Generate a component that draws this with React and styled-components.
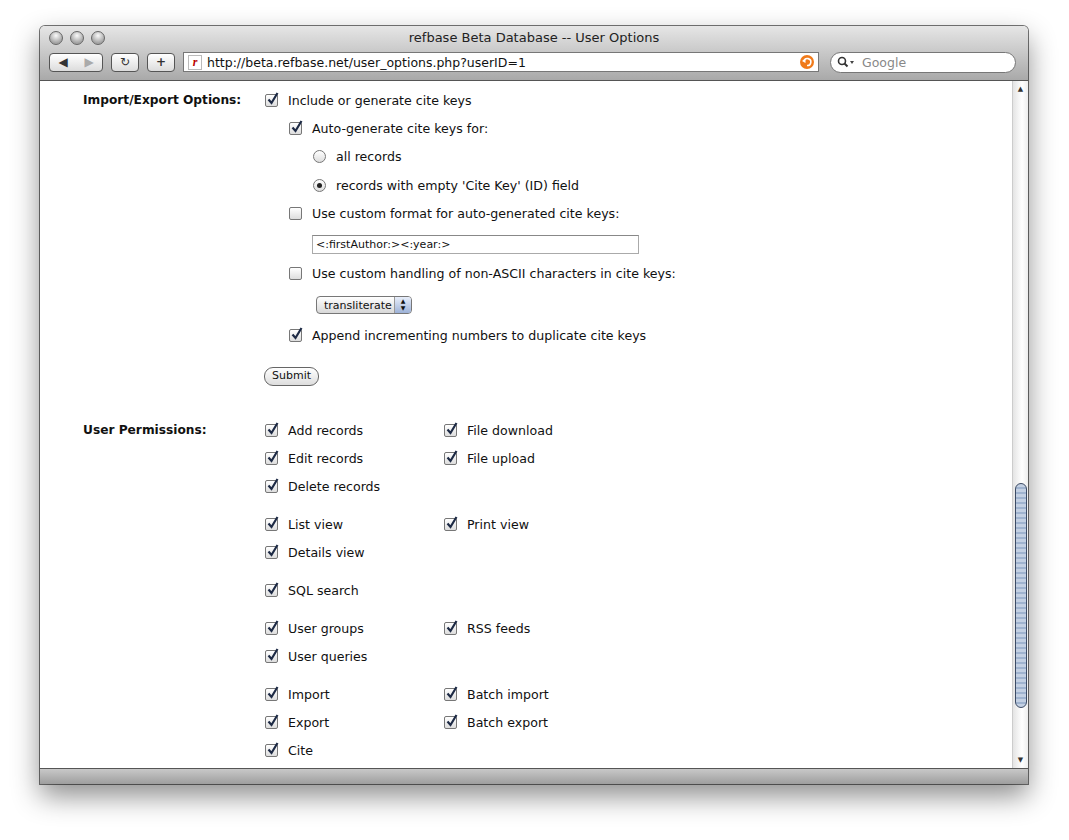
import React from 'react';
import styled, {createGlobalStyle} from 'styled-components';

const Global = createGlobalStyle`
  body { margin: 0; background: #fff; font-family: "DejaVu Sans", "Liberation Sans", sans-serif; }
`;

const Page = styled.div`
  width: 1069px;
  height: 840px;
  padding: 26px 0 0 40px;
  box-sizing: border-box;
`;

const Win = styled.div`
  width: 988px;
  height: 758px;
  display: flex;
  flex-direction: column;
  border-radius: 5px 5px 0 0;
  box-shadow: 0 12px 28px rgba(0,0,0,0.45), 0 0 0 1px #777;
  overflow: hidden;
`;

const Chrome = styled.div`
  height: 54px;
  background: linear-gradient(#e6e6e6, #a9a9a9);
  border-bottom: 1px solid #555;
  display: flex;
  flex-direction: column;
`;

const TitleRow = styled.div`
  height: 24px;
  display: flex;
  align-items: center;
  position: relative;
  padding-left: 9px;
  gap: 7px;
`;

const Light = styled.span`
  width: 12px;
  height: 12px;
  border-radius: 50%;
  border: 1px solid #666;
  background: radial-gradient(circle at 50% 30%, #fafafa, #a4a4a4 70%);
`;

const Title = styled.div`
  position: absolute;
  left: 0;
  right: 0;
  text-align: center;
  font-size: 13px;
  color: #222;
  top: 4px;
`;

const ToolRow = styled.div`
  display: flex;
  align-items: center;
  padding-left: 9px;
  gap: 8px;
  height: 24px;
`;

const Btn = styled.div`
  height: 19px;
  width: ${p => p.w}px;
  border: 1px solid #555;
  border-radius: 4px;
  background: linear-gradient(#fff, #dcdcdc);
  display: flex;
  align-items: center;
  justify-content: space-around;
  font-size: 12px;
  color: #333;
  box-sizing: border-box;
`;

const Url = styled.div`
  width: 636px;
  height: 20px;
  background: #fff;
  border: 1px solid #777;
  display: flex;
  align-items: center;
  gap: 5px;
  padding: 0 4px;
  box-sizing: border-box;
  font-size: 12.5px;
  color: #111;
`;

const Fav = styled.span`
  width: 12px;
  height: 13px;
  border: 1px solid #bbb;
  color: #b00;
  font-family: "Liberation Serif", serif;
  font-style: italic;
  font-weight: bold;
  font-size: 12px;
  line-height: 12px;
  text-align: center;
`;

const Search = styled.div`
  width: 186px;
  height: 21px;
  margin-left: 3px;
  border: 1px solid #777;
  border-radius: 11px;
  background: #fff;
  display: flex;
  align-items: center;
  padding-left: 6px;
  gap: 5px;
  font-size: 12.5px;
  color: #888;
  box-sizing: border-box;
`;

const Body = styled.div`
  flex: 1;
  display: flex;
  background: #fff;
  min-height: 0;
`;

const Content = styled.div`
  flex: 1;
  padding: 10px 0 0 43px;
  font-size: 12.6px;
  color: #111;
`;

const Section = styled.div`
  display: grid;
  grid-template-columns: 182px 1fr;
  margin-bottom: ${p => p.mb || 0}px;
`;

const Label = styled.div`
  font-weight: bold;
  font-size: 12.2px;
  height: 18px;
  line-height: 18px;
`;

const Row = styled.div`
  display: flex;
  align-items: center;
  height: 18px;
  margin-left: ${p => (p.level || 0) * 24}px;
  margin-bottom: ${p => p.mb ?? 10}px;
  gap: 10px;
`;

const Box = styled.span`
  width: 11px;
  height: 11px;
  border: 1px solid #777;
  border-radius: 2px;
  background: linear-gradient(#fff, #ddd);
  position: relative;
  flex: none;
`;

const Tick = styled.svg`
  position: absolute;
  left: 0;
  top: -3px;
`;

const Radio = styled.span`
  width: 11px;
  height: 11px;
  border: 1px solid #777;
  border-radius: 50%;
  background: linear-gradient(#fff, #ddd);
  display: flex;
  align-items: center;
  justify-content: center;
  flex: none;
  &::after {
    content: '';
    width: 5px;
    height: 5px;
    border-radius: 50%;
    background: ${p => (p.on ? '#222' : 'transparent')};
  }
`;

const TextInput = styled.div`
  margin-left: 47px;
  width: 327px;
  height: 19px;
  border: 1px solid #aaa;
  border-top-color: #888;
  box-sizing: border-box;
  font-size: 11px;
  padding: 2px 3px;
  margin-bottom: 10px;
`;

const Select = styled.div`
  margin-left: 51px;
  width: 96px;
  height: 18px;
  border: 1px solid #777;
  border-radius: 4px;
  background: linear-gradient(#fff, #d8d8d8);
  display: flex;
  align-items: center;
  justify-content: space-between;
  font-size: 11px;
  padding-left: 7px;
  box-sizing: border-box;
  margin-bottom: 12px;
`;

const Arrows = styled.span`
  width: 16px;
  height: 16px;
  border-left: 1px solid #999;
  background: linear-gradient(#e8eefa, #9db2d8);
  border-radius: 0 3px 3px 0;
  font-size: 6px;
  line-height: 7px;
  text-align: center;
`;

const Submit = styled.div`
  width: 53px;
  height: 17px;
  border: 1px solid #666;
  border-radius: 9px;
  background: linear-gradient(#fff, #ddd);
  font-size: 11px;
  text-align: center;
  line-height: 16px;
  margin: 23px 0 0 -1px;
`;

const PermGrid = styled.div`
  display: grid;
  grid-template-columns: 179px 1fr;
  row-gap: 10px;
  margin-bottom: 20px;
`;

const Scroll = styled.div`
  width: 15px;
  background: linear-gradient(90deg, #e4e4e4, #fff 60%, #eee);
  border-left: 1px solid #ccc;
  display: flex;
  flex-direction: column;
  align-items: center;
  font-size: 7px;
  color: #333;
`;

const Thumb = styled.div`
  width: 12px;
  height: 225px;
  margin-top: auto;
  margin-bottom: 48px;
  border: 1px solid #3b4a63;
  border-radius: 6px;
  background: repeating-linear-gradient(#c3d0e3 0 3px, #9fb3cf 3px 5px);
  box-sizing: border-box;
`;

const Status = styled.div`
  height: 15px;
  background: linear-gradient(#c8c8c8, #9e9e9e);
  border-top: 1px solid #555;
`;

function Check({on}) {
  return (
    <Box>
      {on && (
        <Tick width="13" height="13" viewBox="0 0 13 13">
          <path d="M2.5 7.5 L5.5 11 L11.5 1" stroke="#1d2a45" strokeWidth="2.2" fill="none" />
        </Tick>
      )}
    </Box>
  );
}

const perms = [
  [['Add records', 'File download'], ['Edit records', 'File upload'], ['Delete records']],
  [['List view', 'Print view'], ['Details view']],
  [['SQL search']],
  [['User groups', 'RSS feeds'], ['User queries']],
  [['Import', 'Batch import'], ['Export', 'Batch export'], ['Cite']],
];

export default function App() {
  return (
    <Page>
      <Global />
      <Win>
        <Chrome>
          <TitleRow>
            <Light /><Light /><Light />
            <Title>refbase Beta Database -- User Options</Title>
          </TitleRow>
          <ToolRow>
            <Btn w={54}><span>◀</span><span style={{color: '#aaa'}}>▶</span></Btn>
            <Btn w={28}>↻</Btn>
            <Btn w={28}><b>+</b></Btn>
            <Url>
              <Fav>r</Fav>
              <span style={{flex: 1}}>http://beta.refbase.net/user_options.php?userID=1</span>
              <svg width="14" height="14" viewBox="0 0 14 14">
                <circle cx="7" cy="7" r="7" fill="#f07a1a" />
                <path d="M4 6 A3.5 3.5 0 1 1 7 10.5" stroke="#fff" strokeWidth="1.6" fill="none" />
                <path d="M2 6 L5.5 3.5 L5.5 8 Z" fill="#fff" />
              </svg>
            </Url>
            <Search>
              <svg width="20" height="12" viewBox="0 0 20 12">
                <circle cx="5" cy="5" r="3.5" stroke="#333" strokeWidth="1.6" fill="none" />
                <path d="M7.5 7.5 L10.5 10.5" stroke="#333" strokeWidth="2" />
                <path d="M13 5 L17 5 L15 8 Z" fill="#444" />
              </svg>
              Google
            </Search>
          </ToolRow>
        </Chrome>
        <Body>
          <Content>
            <Section mb={35}>
              <Label>Import/Export Options:</Label>
              <div>
                <Row><Check on />Include or generate cite keys</Row>
                <Row level={1}><Check on />Auto-generate cite keys for:</Row>
                <Row level={2} mb={11}><Radio />all records</Row>
                <Row level={2}><Radio on />records with empty 'Cite Key' (ID) field</Row>
                <Row level={1} mb={13}><Check />Use custom format for auto-generated cite keys:</Row>
                <TextInput>&lt;:firstAuthor:&gt;&lt;:year:&gt;</TextInput>
                <Row level={1} mb={14}><Check />Use custom handling of non-ASCII characters in cite keys:</Row>
                <Select>transliterate<Arrows>▲<br />▼</Arrows></Select>
                <Row level={1}><Check on />Append incrementing numbers to duplicate cite keys</Row>
                <Submit>Submit</Submit>
              </div>
            </Section>
            <Section>
              <Label>User Permissions:</Label>
              <div>
                {perms.map((g, i) => (
                  <PermGrid key={i}>
                    {g.map((r, j) => (
                      <React.Fragment key={j}>
                        <Row mb={0}><Check on />{r[0]}</Row>
                        {r[1] ? <Row mb={0}><Check on />{r[1]}</Row> : <span />}
                      </React.Fragment>
                    ))}
                  </PermGrid>
                ))}
              </div>
            </Section>
          </Content>
          <Scroll>
            <span style={{marginTop: 4}}>▲</span>
            <Thumb />
            <span style={{marginBottom: 4}}>▼</span>
          </Scroll>
        </Body>
        <Status />
      </Win>
    </Page>
  );
}
